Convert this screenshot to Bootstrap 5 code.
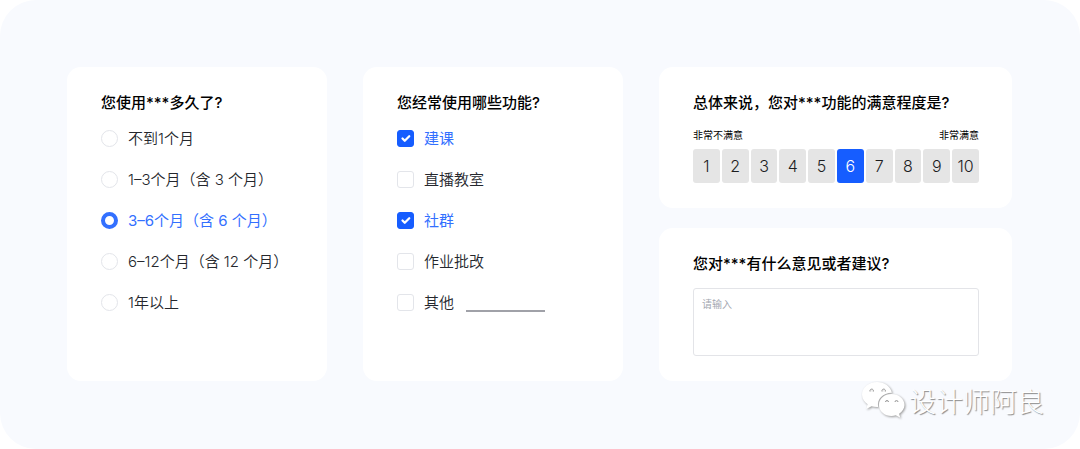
<!DOCTYPE html>
<html lang="zh-CN">
<head>
<meta charset="utf-8">
<meta name="viewport" content="width=device-width, initial-scale=1">
<title>用户问卷</title>
<link href="https://cdn.jsdelivr.net/npm/bootstrap@5.3.0/dist/css/bootstrap.min.css" rel="stylesheet">
<style>
  body { font-family: Inter, "Noto Sans CJK SC", sans-serif; color: #25272d; background: #fff; }
  .survey { display: grid; grid-template-columns: 260fr 260fr 353fr; background: #f8fafe; border-radius: 36px; padding: 67px 68px 68px 67px; min-height: 100vh; column-gap: 36px; }
  .col-wide { min-width: 0; row-gap: 20px; }
  .panel { background: #fff; border: 0; border-radius: 14px; padding: 24px 33px 25px 34px; }
  .question { font-size: 15px; line-height: 24px; font-weight: 500; color: #000; margin: 0 0 10px; float: none; white-space: nowrap; }
  .col-wide .question { margin-bottom: 12px; }
  .options { row-gap: 15px; }
  .option { column-gap: 10px; font-size: 15px; line-height: 24px; font-weight: 350; white-space: nowrap; }
  .option label { padding-top: 2px; }
  .option .form-check-input { width: 17px; height: 17px; margin: 0; float: none; border: 1px solid #e3e5ea; flex: none; box-shadow: none; }
  .option .form-check-input[type=checkbox] { border-radius: 3px; }
  .option .form-check-input[type=checkbox]:checked { background-color: #165dff; border-color: #165dff; background-size: 15px; }
  .option .form-check-input[type=radio]:checked { background: #fff; border: 4px solid #3370ff; }
  .option .form-check-input:checked + label { color: #3370ff; font-weight: 400; }
  .other-text { width: 79px; height: 20px; border: 0; border-bottom: 2px solid #a0a1a8; background: none; padding: 0; margin-left: 2px; font-size: 15px; border-radius: 0; }
  .scale-ends { font-size: 10px; line-height: 16px; margin-bottom: 6px; color: #000; }
  .scale { display: grid; grid-template-columns: repeat(10, 1fr); column-gap: 2px; }
  .score { height: 34px; padding: 0; border: 0; border-radius: 3px; background: #e5e5e5; color: #1d1d1f; font-size: 16px; line-height: 24px; font-weight: 350; }
  .score.active { background: #165dff !important; color: #fff; }
  .feedback { height: 68px; border: 1px solid #e3e4e8; border-radius: 3px; padding: 7px 8px; font-size: 10px; line-height: 16px; resize: none; }
  .feedback::placeholder { color: #a3a7b0; }
  .signature { right: 36px; bottom: 30px; column-gap: 4px; color: #fff; font: 300 27px/36px "Noto Sans CJK SC", sans-serif; text-shadow: 1px 1px 1px #888; }
  .signature svg { filter: drop-shadow(1px 1px 1px #999); }
</style>
</head>
<body>
<main class="survey position-relative">
  <section class="card panel">
    <fieldset>
      <legend class="question">您使用***多久了?</legend>
      <div class="options d-flex flex-column">
        <div class="option d-flex align-items-center"><input class="form-check-input" type="radio" name="age" id="a1"><label for="a1">不到1个月</label></div>
        <div class="option d-flex align-items-center"><input class="form-check-input" type="radio" name="age" id="a2"><label for="a2">1–3个月（含 3 个月）</label></div>
        <div class="option d-flex align-items-center"><input class="form-check-input" type="radio" name="age" id="a3" checked><label for="a3">3–6个月（含 6 个月）</label></div>
        <div class="option d-flex align-items-center"><input class="form-check-input" type="radio" name="age" id="a4"><label for="a4">6–12个月（含 12 个月）</label></div>
        <div class="option d-flex align-items-center"><input class="form-check-input" type="radio" name="age" id="a5"><label for="a5">1年以上</label></div>
      </div>
    </fieldset>
  </section>

  <section class="card panel">
    <fieldset>
      <legend class="question">您经常使用哪些功能?</legend>
      <div class="options d-flex flex-column">
        <div class="option d-flex align-items-center"><input class="form-check-input" type="checkbox" id="f1" checked><label for="f1">建课</label></div>
        <div class="option d-flex align-items-center"><input class="form-check-input" type="checkbox" id="f2"><label for="f2">直播教室</label></div>
        <div class="option d-flex align-items-center"><input class="form-check-input" type="checkbox" id="f3" checked><label for="f3">社群</label></div>
        <div class="option d-flex align-items-center"><input class="form-check-input" type="checkbox" id="f4"><label for="f4">作业批改</label></div>
        <div class="option d-flex align-items-center"><input class="form-check-input" type="checkbox" id="f5"><label for="f5">其他</label><input class="other-text" type="text" aria-label="其他功能"></div>
      </div>
    </fieldset>
  </section>

  <div class="col-wide d-flex flex-column">
    <section class="card panel">
      <h2 class="question">总体来说，您对***功能的满意程度是?</h2>
      <div class="scale-ends d-flex justify-content-between"><span>非常不满意</span><span>非常满意</span></div>
      <div class="scale" role="group" aria-label="满意程度">
        <button type="button" class="btn score">1</button>
        <button type="button" class="btn score">2</button>
        <button type="button" class="btn score">3</button>
        <button type="button" class="btn score">4</button>
        <button type="button" class="btn score">5</button>
        <button type="button" class="btn score active" aria-pressed="true">6</button>
        <button type="button" class="btn score">7</button>
        <button type="button" class="btn score">8</button>
        <button type="button" class="btn score">9</button>
        <button type="button" class="btn score">10</button>
      </div>
    </section>
    <section class="card panel flex-grow-1">
      <label class="question" for="feedback">您对***有什么意见或者建议?</label>
      <textarea class="form-control feedback" id="feedback" placeholder="请输入"></textarea>
    </section>
  </div>

  <div class="signature position-absolute d-flex align-items-center">
    <svg width="43" height="37" viewBox="0 0 43 37" aria-hidden="true">
      <path fill="#fff" d="M15 0C6.700 0 0 5.600 0 12.500c0 4 2.200 7.400 5.600 9.700L4.300 27l5.200-2.800c1.800.5 3.600.8 5.500.8h1.200C14.500 17 21 11 29.900 10.800 28.700 4.700 22.500 0 15 0z"/>
      <path fill="#fff" d="M29.500 12C22.400 12 17 16.800 17 23s5.400 11 12.500 11c1.500 0 3-.3 4.300-.7l4.500 2.500-1.200-4.100C40.400 29.600 42.500 26.500 42.500 23c0-6.200-5.900-11-13-11z"/>
      <g fill="#eee" stroke="#999" stroke-width="1"><path d="M8 9.500a1.800 1.800 0 1 1 3.400 0M20 9.500a1.800 1.800 0 1 1 3.400 0M23.500 20a1.500 1.500 0 1 1 3 0M33 20a1.500 1.500 0 1 1 3 0"/></g>
    </svg>
    <span>设计师阿良</span>
  </div>
</main>
<script src="https://cdn.jsdelivr.net/npm/bootstrap@5.3.0/dist/js/bootstrap.bundle.min.js"></script>
</body>
</html>
